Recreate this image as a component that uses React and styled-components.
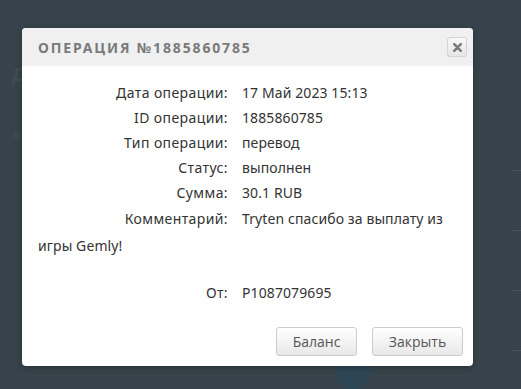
import React from 'react'
import styled, { createGlobalStyle } from 'styled-components'

const GlobalStyle = createGlobalStyle`
  html, body {
    margin: 0;
    padding: 0;
    background: #37434b;
  }
  * { box-sizing: border-box; }
`

const Page = styled.div`
  position: relative;
  width: 521px;
  height: 389px;
  overflow: hidden;
  background: #37434b;
  font-family: 'Noto Sans', sans-serif;
`

const Backdrop = styled.div`
  display: flex;
  flex-direction: column;
  gap: 40px;
  padding: 62px 0 0 12px;
  color: #414d55;
  font-size: 18px;
  font-weight: 700;
`

const FaintText = styled.div`
  font-size: ${p => p.size || 18}px;
`

const FaintCoin = styled.div`
  position: absolute;
  left: 336px;
  top: 356px;
  width: 34px;
  height: 34px;
  border-radius: 50%;
  background: #2d4656;
`

const FaintLine = styled.div`
  position: absolute;
  right: 0;
  top: ${p => p.top}px;
  width: 8px;
  height: 1px;
  background: #49555c;
`

const Modal = styled.div`
  position: absolute;
  left: 22px;
  top: 28px;
  width: 451px;
  height: 338px;
  background: #fff;
  border-radius: 4px;
  overflow: hidden;
  box-shadow: 0 2px 6px rgba(0, 0, 0, 0.25);
  display: flex;
  flex-direction: column;
`

const Header = styled.div`
  height: 38px;
  background: #f0f0f0;
  display: flex;
  align-items: center;
  justify-content: space-between;
  padding: 0 6px 0 16px;
`

const Title = styled.h2`
  margin: 0;
  font-family: 'Noto Sans', sans-serif;
  font-size: 14px;
  font-weight: 700;
  letter-spacing: 1.85px;
  color: #7a7a7a;
`

const CloseButton = styled.button`
  width: 20px;
  height: 20px;
  padding: 0;
  border: 1px solid #d4d4d4;
  border-radius: 3px;
  background: linear-gradient(#f8f8f8, #e6e6e6);
  display: flex;
  align-items: center;
  justify-content: center;
`

const Body = styled.div`
  padding: 14px 16px 0;
  color: #333;
  font-size: 14px;
`

const Row = styled.div`
  line-height: ${p => p.lh || 25}px;
  margin-top: ${p => p.gap || 0}px;
`

const Label = styled.span`
  display: inline-block;
  width: 190px;
  margin-right: 14px;
  text-align: right;
  letter-spacing: 0.4px;
`

const Value = styled.span`
  letter-spacing: 0.1px;
`

const Footer = styled.div`
  margin-top: auto;
  display: flex;
  justify-content: flex-end;
  gap: 15px;
  padding: 0 10px 10px;
`

const Button = styled.button`
  width: ${p => p.w}px;
  height: 29px;
  border: 1px solid #cdcdcd;
  border-radius: 3px;
  background: linear-gradient(#ffffff, #e8e8e8);
  color: #555;
  font-family: 'Open Sans', sans-serif;
  font-size: 14px;
  padding: 0;
`

const rows = [
  ['Дата операции:', '17 Май 2023 15:13'],
  ['ID операции:', '1885860785'],
  ['Тип операции:', 'перевод'],
  ['Статус:', 'выполнен'],
  ['Сумма:', '30.1 RUB'],
]

export default function App() {
  return (
    <Page>
      <GlobalStyle />
      <Backdrop>
        <FaintText>Д</FaintText>
        <FaintText size={14}>+ 2</FaintText>
      </Backdrop>
      {[170, 230, 290, 350].map(t => <FaintLine key={t} top={t} />)}
      <FaintCoin />
      <Modal>
        <Header>
          <Title>ОПЕРАЦИЯ №1885860785</Title>
          <CloseButton aria-label="close">
            <svg width="9" height="9" viewBox="0 0 9 9">
              <path d="M1.2 1.2 L7.8 7.8 M7.8 1.2 L1.2 7.8" stroke="#7c7c7c" strokeWidth="2.6" strokeLinecap="round" />
            </svg>
          </CloseButton>
        </Header>
        <Body>
          {rows.map(([l, v]) => (
            <Row key={l}><Label>{l}</Label><Value>{v}</Value></Row>
          ))}
          <Row lh={27}>
            <Label>Комментарий:</Label><Value>Tryten спасибо за выплату из</Value><br />
            <Value>игры Gemly!</Value>
          </Row>
          <Row gap={21}><Label>От:</Label><Value>P1087079695</Value></Row>
        </Body>
        <Footer>
          <Button w={81}>Баланс</Button>
          <Button w={91}>Закрыть</Button>
        </Footer>
      </Modal>
    </Page>
  )
}
